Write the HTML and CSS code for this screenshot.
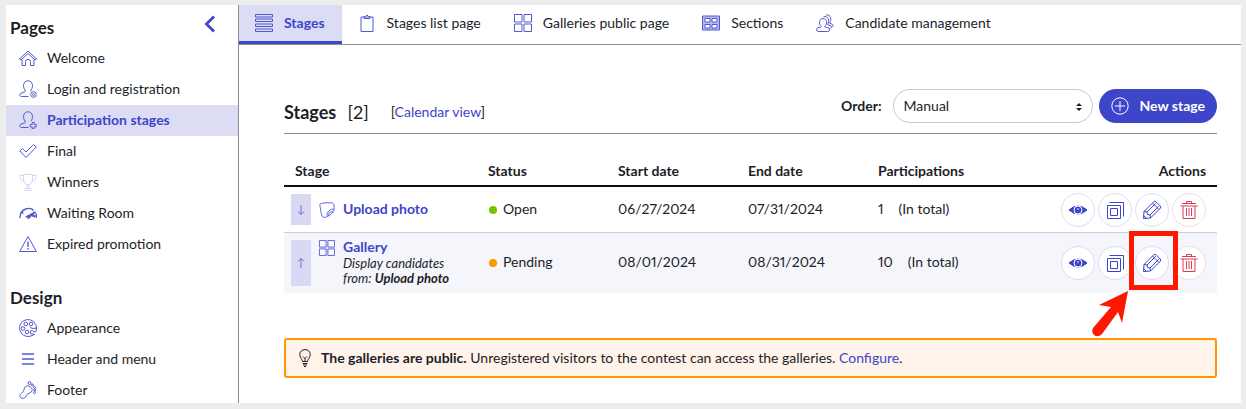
FILE: index.html
```
<!DOCTYPE html>
<html lang="en">
<head>
  <meta charset="UTF-8">
  <meta name="viewport" content="width=device-width, initial-scale=1.0">
  <title>Participation stages</title>
  <link rel="stylesheet" href="styles.css">
</head>
<body>
  <!-- Shared icons -->
  <svg class="sprite" aria-hidden="true">
    <symbol id="icon-grid" viewBox="0 0 18 18">
      <path d="M.5 .5h7.500v7.500h-7.500zM10 .5h7.500v7.500h-7.500zM.5 10h7.500v7.500h-7.500zM10 10h7.500v7.500h-7.500z"/>
    </symbol>
    <symbol id="icon-eye" viewBox="0 0 20 20">
      <path d="M1 10Q10 2 19 10Q10 18 1 10z" fill="currentColor"/>
      <circle cx="10" cy="10" r="4" fill="currentColor" stroke="#fff"/>
      <circle cx="10" cy="9" r=".8" fill="#fff" stroke="none"/>
    </symbol>
    <symbol id="icon-copy" viewBox="0 0 20 20">
      <path d="M2.500 5.500h13v13h-13zM5.500 8.500h7v7h-7zM4.500 2.500h14v14"/>
    </symbol>
    <symbol id="icon-pencil" viewBox="0 0 20 20">
      <path d="M1.500 18.500L2 11.500L12 1.500Q13 .8 14 1.800L18.200 6Q19.200 7 18.500 8L8.500 18zM2 11.500L5 12L5.500 14.500L8 15L8.500 18M5 12L13.800 3.200M8 15L16.800 6.200M10.500 3L17 9.500M1.500 15.500L4.500 18.500"/>
    </symbol>
    <symbol id="icon-trash" viewBox="0 0 20 20">
      <path d="M1.500 6h17M3 3.500h14M7.500 3V1.500h5V3M4 6v12.500h12V6M7.500 8v8M10 8v8M12.500 8v8"/>
    </symbol>
  </svg>

  <div class="app">
    <nav class="sidebar">
      <div class="sidebar-header">
        <h2>Pages</h2>
        <button type="button" class="collapse" aria-label="Collapse menu">
          <svg width="12" height="18" viewBox="0 0 12 18"><path d="M10 1.500L2.500 9L10 16.500" stroke-width="2.800"/></svg>
        </button>
      </div>
      <ul class="menu">
        <li><a href="#">
          <svg class="icon" viewBox="0 0 18 18"><path d="M.5 10L9 2L17.500 10L16 11L9 4.500L2 11zM3 10.500V16.500H6.500V12.500Q6.500 10.500 9 10.500Q11.500 10.500 11.500 12.500V16.500H15V10.500"/></svg>
          Welcome</a></li>
        <li><a href="#">
          <svg class="icon" viewBox="0 0 18 18"><path d="M9.500 16.500H2.500C.2 16.500 .2 13.500 3 12.800L5.500 12Q7 11.500 6 10C3.500 7 4 .8 9 .8S14.500 7 12 10Q11.500 11 12 11.500"/><circle cx="14.500" cy="14.500" r="2.800"/><circle cx="14.500" cy="14.500" r="1"/></svg>
          Login and registration</a></li>
        <li><a href="#" class="active">
          <svg class="icon" viewBox="0 0 18 18"><path d="M9.500 16.500H2.500C.2 16.500 .2 13.500 3 12.800L5.500 12Q7 11.500 6 10C3.500 7 4 .8 9 .8S14.500 7 12 10M13.200 11.500h2v2h2v2.400h-2v2h-2v-2h-2v-2.400h2z"/></svg>
          Participation stages</a></li>
        <li><a href="#">
          <svg class="icon" viewBox="0 0 18 18"><path d="M.8 9L3.500 6.500L7 10L14.500 2.500L17.300 5L7 15.500z"/></svg>
          Final</a></li>
        <li><a href="#">
          <svg class="icon icon-muted" viewBox="0 0 18 18"><path d="M4.500 1.500H13.500V6C13.500 9 12 11.500 9 12C6 11.500 4.500 9 4.500 6zM4.500 2.500H.8C.8 6 2.500 8 5.200 8.500M13.500 2.500H17.200C17.200 6 15.500 8 12.800 8.500M8.200 12v3M9.800 12v3M5.500 15.500h7M4.500 17.300h9"/></svg>
          Winners</a></li>
        <li><a href="#">
          <svg class="icon" viewBox="0 0 18 18"><path d="M1 14C1 3.500 12 3 14.500 6.500M17 9.500Q17.500 11 17.300 14M2.500 8L4.500 9.500" stroke-width="1.400"/><path d="M16.500 8L10 13L8.500 12.500zM13 11.500L16.500 12.500" stroke-width="2"/><circle cx="9.500" cy="13" r="1.500"/></svg>
          Waiting Room</a></li>
        <li><a href="#">
          <svg class="icon" viewBox="0 0 18 18"><path d="M9 1.500L17.400 16.500H.6z"/><path d="M9 6.500V12M9 13V14.500" stroke-width="1.400"/></svg>
          Expired promotion</a></li>
      </ul>
      <h2>Design</h2>
      <ul class="menu">
        <li><a href="#">
          <svg class="icon" viewBox="0 0 18 18"><path d="M17.500 9A8.500 8.500 0 1 0 11 17.300L15.500 15.500L11.500 14.500V12Q14 10.500 15 13L17 12.500L17.500 9L14 9.500L11 8.500"/><circle cx="6.800" cy="5" r="1.800"/><circle cx="12" cy="5" r="1.800"/><circle cx="4" cy="9.500" r="1.800"/><circle cx="8" cy="13" r="1.800"/></svg>
          Appearance</a></li>
        <li><a href="#">
          <svg class="icon" viewBox="0 0 18 18"><path d="M3 4h12M3 9h12M3 14h12" stroke-width="1.700"/></svg>
          Header and menu</a></li>
        <li><a href="#">
          <svg class="icon" viewBox="0 0 18 18"><path d="M6.500 5.500C9 3.500 13.500 6.500 13.200 9.500C12.500 12 9 12 7.500 14C6.500 17 4.500 18 2 17C0 15 .8 13 3.500 11.500C5.500 10 4.500 7.500 6.500 5.500z"/><circle cx="10.500" cy="2" r="1.500"/><circle cx="13.500" cy="4" r="1"/><circle cx="15.500" cy="6.500" r="1"/><circle cx="15.800" cy="9" r="1"/><circle cx="15.500" cy="11.500" r="1"/></svg>
          Footer</a></li>
      </ul>
    </nav>

    <div class="main">
      <nav class="tabs">
        <a href="#" class="active">
          <svg class="icon" viewBox="0 0 18 18"><path d="M.5 .5h17v2.500h-17zM.5 5h17v2.500h-17zM.5 10h17v2.500h-17zM.5 15h17v2.500h-17z"/></svg>
          Stages</a>
        <a href="#">
          <svg class="icon" viewBox="0 0 18 18"><path d="M6 3H3V17.500H15V3H12"/><path d="M6 2.500h1.500L9 1L10.500 2.500H12V4.500H6z" fill="currentColor" fill-opacity=".5"/></svg>
          Stages list page</a>
        <a href="#">
          <svg class="icon"><use href="#icon-grid"/></svg>
          Galleries public page</a>
        <a href="#">
          <svg class="icon" viewBox="0 0 18 18"><path d="M.5 2h17v14h-17z" fill="#b9bbf0"/><path d="M3 4.500h5v3.500h-5zM10 4.500h5v3.500h-5zM3 10.500h5v3.500h-5zM10 10.500h5v3.500h-5z" fill="#fff"/></svg>
          Sections</a>
        <a href="#">
          <svg class="icon" viewBox="0 0 18 18"><path d="M5.500 12.500C2 10 3 4.500 7 4.500S12 10 8.500 12.500Q9 13.500 11.500 13.500Q14 14 13.700 16Q13.500 17.500 11.500 17.500H2.500Q.5 17.500 .5 15.500Q.6 13.800 3 13.500Q5.500 13.300 5.500 12.500M7.500 2.800C12 1 14 7 11.500 10.500L15 12Q16 13.500 14.800 14.500M10 1C15 0 16 6 13.500 9L16.500 10.500Q18 12 16.500 13"/></svg>
          Candidate management</a>
      </nav>

      <div class="content">
        <div class="toolbar">
          <h1>Stages <span class="count">[2]</span></h1>
          <span class="calendar">[<a href="#">Calendar view</a>]</span>
          <label for="order">Order:</label>
          <div class="select">
            <select id="order">
              <option>Manual</option>
            </select>
            <svg width="6" height="8" viewBox="0 0 6 8"><path d="M0 3L3 0L6 3zM0 5L3 8L6 5z"/></svg>
          </div>
          <button type="button" class="new-stage">
            <svg class="icon" viewBox="0 0 18 18"><circle cx="9" cy="9" r="8.200"/><path d="M9 4v10M4 9h10"/></svg>
            New stage
          </button>
        </div>

        <table class="stages">
          <thead>
            <tr>
              <th class="col-stage">Stage</th>
              <th class="col-data">Status</th>
              <th class="col-data">Start date</th>
              <th class="col-data">End date</th>
              <th class="col-data">Participations</th>
              <th class="col-actions">Actions</th>
            </tr>
          </thead>
          <tbody>
            <tr>
              <td class="stage-cell">
                <div class="stage">
                  <button type="button" class="move" aria-label="Move down">
                    <svg width="8" height="12" viewBox="0 0 8 12"><path d="M4 1V10.500M1 7.500L4 10.500L7 7.500"/></svg>
                  </button>
                  <svg class="stage-icon" viewBox="0 0 18 18"><path d="M1 4Q0 2 3 1.500Q9 .5 15 1Q17 1.500 17 5V8C17 12 11 16.500 5.500 17.500Q3 17 2.500 13zM17 8Q14 7.500 11 10Q8.500 12 9 16M10.500 15.500L11.500 12L15.500 10.500"/></svg>
                  <a href="#" class="stage-name">Upload photo</a>
                </div>
              </td>
              <td><span class="dot open"></span>Open</td>
              <td>06/27/2024</td>
              <td>07/31/2024</td>
              <td>1<span class="total">(In total)</span></td>
              <td class="actions-cell">
                <div class="actions">
                  <button type="button" aria-label="View"><svg><use href="#icon-eye"/></svg></button>
                  <button type="button" aria-label="Duplicate"><svg><use href="#icon-copy"/></svg></button>
                  <button type="button" aria-label="Edit"><svg><use href="#icon-pencil"/></svg></button>
                  <button type="button" aria-label="Delete" class="delete"><svg><use href="#icon-trash"/></svg></button>
                </div>
              </td>
            </tr>
            <tr>
              <td class="stage-cell">
                <div class="stage stage-tall">
                  <button type="button" class="move" aria-label="Move up">
                    <svg width="8" height="12" viewBox="0 0 8 12"><path d="M4 11V1.500M1 4.500L4 1.500L7 4.500"/></svg>
                  </button>
                  <svg class="stage-icon"><use href="#icon-grid"/></svg>
                  <div class="stage-text">
                    <a href="#" class="stage-name">Gallery</a>
                    <p>Display candidates<br>from: <b>Upload photo</b></p>
                  </div>
                </div>
              </td>
              <td><span class="dot pending"></span>Pending</td>
              <td>08/01/2024</td>
              <td>08/31/2024</td>
              <td>10<span class="total">(In total)</span></td>
              <td class="actions-cell">
                <div class="actions">
                  <button type="button" aria-label="View"><svg><use href="#icon-eye"/></svg></button>
                  <button type="button" aria-label="Duplicate"><svg><use href="#icon-copy"/></svg></button>
                  <div class="callout">
                    <button type="button" aria-label="Edit"><svg><use href="#icon-pencil"/></svg></button>
                    <span class="callout-box"></span>
                    <svg class="callout-arrow" viewBox="0 0 38 48"><path d="M36 1L30 33L26 22L10 44Q6 48 2 45Q-1 42 1 38L19 17L7 15z"/></svg>
                  </div>
                  <button type="button" aria-label="Delete" class="delete"><svg><use href="#icon-trash"/></svg></button>
                </div>
              </td>
            </tr>
          </tbody>
        </table>

        <div class="notice">
          <svg viewBox="0 0 12 18"><path d="M3.500 12.500C3.500 10 .8 9 .8 5.500C.8 2.500 3 .6 6 .6S11.200 2.500 11.200 5.500C11.200 9 8.500 10 8.500 12.500zM4 7.500L6 9.500L8 7.500M6 9.500V12.500M3.500 14.500h5M4 16h4M5 17.500h2"/></svg>
          <p><b>The galleries are public.</b> Unregistered visitors to the contest can access the galleries. <a href="#">Configure</a>.</p>
        </div>
      </div>
    </div>
  </div>
</body>
</html>
```
FILE: styles.css
```
/* Reset some default styles */
* {
  box-sizing: border-box;
}

body, h1, h2, p, ul {
  margin: 0;
  padding: 0;
}

/* Main styles */
body {
  height: 100vh;
  padding: 5px 5px 6px 6px;
  background-color: #ededed;
  color: #1c1e28;
  font-family: Lato, "Open Sans", sans-serif;
  font-size: 14px;
  font-variant-numeric: proportional-nums;
  line-height: 20px;
}

a {
  color: #3d45c9;
  text-decoration: none;
}

button {
  padding: 0;
  border: none;
  background: none;
  color: #3d45c9;
  font: inherit;
  cursor: pointer;
}

svg {
  display: block;
  flex-shrink: 0;
  fill: none;
  stroke: currentColor;
}

.sprite {
  position: absolute;
  width: 0;
  height: 0;
}

.icon {
  width: 18px;
  height: 18px;
  color: #5258d0;
}

.icon-muted {
  color: #d5d5f3;
}

.app {
  display: flex;
  height: 100%;
  background-color: #fff;
  overflow: hidden;
}

/* Sidebar */
.sidebar {
  width: 233px;
  flex-shrink: 0;
  padding-top: 8px;
  border-right: 1px solid #8c8c8c;
}

.sidebar h2 {
  padding-left: 4px;
  font-size: 17px;
  line-height: 30px;
}

.sidebar-header {
  display: flex;
  justify-content: space-between;
}

.collapse {
  align-self: flex-start;
  margin: 2px 22px 0 0;
}

.menu {
  list-style: none;
}

.menu + h2 {
  margin-top: 23px;
}

.menu a {
  display: flex;
  align-items: center;
  gap: 10px;
  height: 31px;
  padding: 0 0 2px 13px;
  color: #1c1e28;
}

.menu .active {
  background-color: #dcdcf4;
  color: #3d45c9;
  font-weight: bold;
}

/* Tabs */
.main {
  flex-grow: 1;
}

.tabs {
  display: flex;
  height: 40px;
  border-bottom: 1px solid #8c8c8c;
}

.tabs a {
  display: flex;
  align-items: center;
  gap: 11px;
  padding: 0 17px 0 16px;
  border-bottom: 3px solid transparent;
  color: #1c1e28;
}

.tabs .active {
  border-bottom-color: #3d45c9;
  background-color: #dcdcf4;
  color: #3d45c9;
  font-weight: bold;
}

.content {
  padding: 44px 24px 0 45px;
}

/* Toolbar */
.toolbar {
  display: flex;
  align-items: center;
  height: 45px;
  padding-bottom: 10px;
  border-bottom: 1px solid #8c8c8c;
}

h1 {
  padding-top: 12px;
  font-size: 18px;
}

.count {
  margin-left: 7px;
  font-weight: normal;
}

.calendar {
  margin: 0 auto 0 22px;
  padding-top: 12px;
}

.toolbar label {
  margin-right: 11px;
  font-weight: bold;
}

.select {
  position: relative;
  width: 200px;
  margin-right: 6px;
}

.select select {
  appearance: none;
  width: 100%;
  height: 34px;
  padding: 0 10px;
  border: 1px solid #c9c9c9;
  border-radius: 17px;
  background-color: #fff;
  color: #1c1e28;
  font: inherit;
}

.select svg {
  position: absolute;
  top: 14px;
  right: 11px;
  fill: #1c1e28;
  stroke: none;
  pointer-events: none;
}

.new-stage {
  display: flex;
  align-items: center;
  gap: 11px;
  height: 34px;
  padding: 0 12px;
  border-radius: 17px;
  background-color: #3d45c9;
  color: #fff;
  font-weight: bold;
  white-space: nowrap;
}

.new-stage .icon {
  color: #fff;
}

/* Stages table */
.stages {
  width: 100%;
  margin-top: 22px;
  border-collapse: separate;
  border-spacing: 0;
  table-layout: fixed;
}

.stages th {
  height: 31px;
  padding: 0 11px;
  border-bottom: 2px solid #0b0d17;
  text-align: left;
}

.stages .col-stage {
  width: 193px;
}

.stages .col-data {
  width: 130px;
}

.stages .col-actions {
  text-align: right;
}

.stages td {
  padding: 0 11px 2px;
}

.stages .actions-cell {
  padding-bottom: 0;
}

.stages tbody tr:first-child td {
  border-bottom: 1px solid #cfcfcf;
}

.stages tbody tr:last-child {
  background-color: #f5f5fc;
}

.stages .stage-cell {
  padding: 7px;
}

.stage {
  display: flex;
  gap: 8px;
  min-height: 31px;
  align-items: center;
}

.stage-tall {
  align-items: flex-start;
}

.move {
  display: flex;
  align-items: center;
  justify-content: center;
  align-self: stretch;
  width: 20px;
  background-color: #d9d9f3;
  color: #6a6fd8;
}

.stage-icon {
  width: 16px;
  height: 16px;
  color: #5258d0;
}

.stage-name {
  padding-bottom: 2px;
  font-weight: bold;
}

.stage-text {
  display: flex;
  flex-direction: column;
}

.stage-text .stage-name {
  line-height: 14px;
}

.stage-text p {
  font-size: 13px;
  font-style: italic;
  line-height: 15px;
}

.dot {
  display: inline-block;
  width: 8px;
  height: 8px;
  margin: 0 6px 0 1px;
  border-radius: 50%;
}

.open {
  background-color: #76c400;
}

.pending {
  background-color: #ff9500;
}

.total {
  margin-left: 15px;
}

.actions {
  display: flex;
  justify-content: flex-end;
  gap: 3px;
}

.actions button {
  display: flex;
  align-items: center;
  justify-content: center;
  width: 34px;
  height: 34px;
  border: 1px solid #dcdcf4;
  border-radius: 50%;
  background-color: #fff;
}

.actions button svg {
  width: 20px;
  height: 20px;
}

.actions .delete {
  border-color: #fbd9dc;
  color: #dc3b50;
}

/* Red marker on top of the edit button */
.callout {
  position: relative;
}

.callout-box {
  position: absolute;
  inset: -15px -9px -10px -6px;
  border: 5px solid #ff1800;
  z-index: 1;
}

.callout-arrow {
  position: absolute;
  top: 44px;
  right: 39px;
  width: 38px;
  height: 48px;
  fill: #ff1800;
  stroke: none;
  z-index: 1;
}

/* Notice */
.notice {
  display: flex;
  align-items: center;
  gap: 10px;
  margin-top: 45px;
  padding: 8px 13px;
  border: 2px solid #ff9500;
  border-radius: 3px;
  background-color: #fff3ea;
}

.notice svg {
  width: 12px;
  height: 18px;
}
```
